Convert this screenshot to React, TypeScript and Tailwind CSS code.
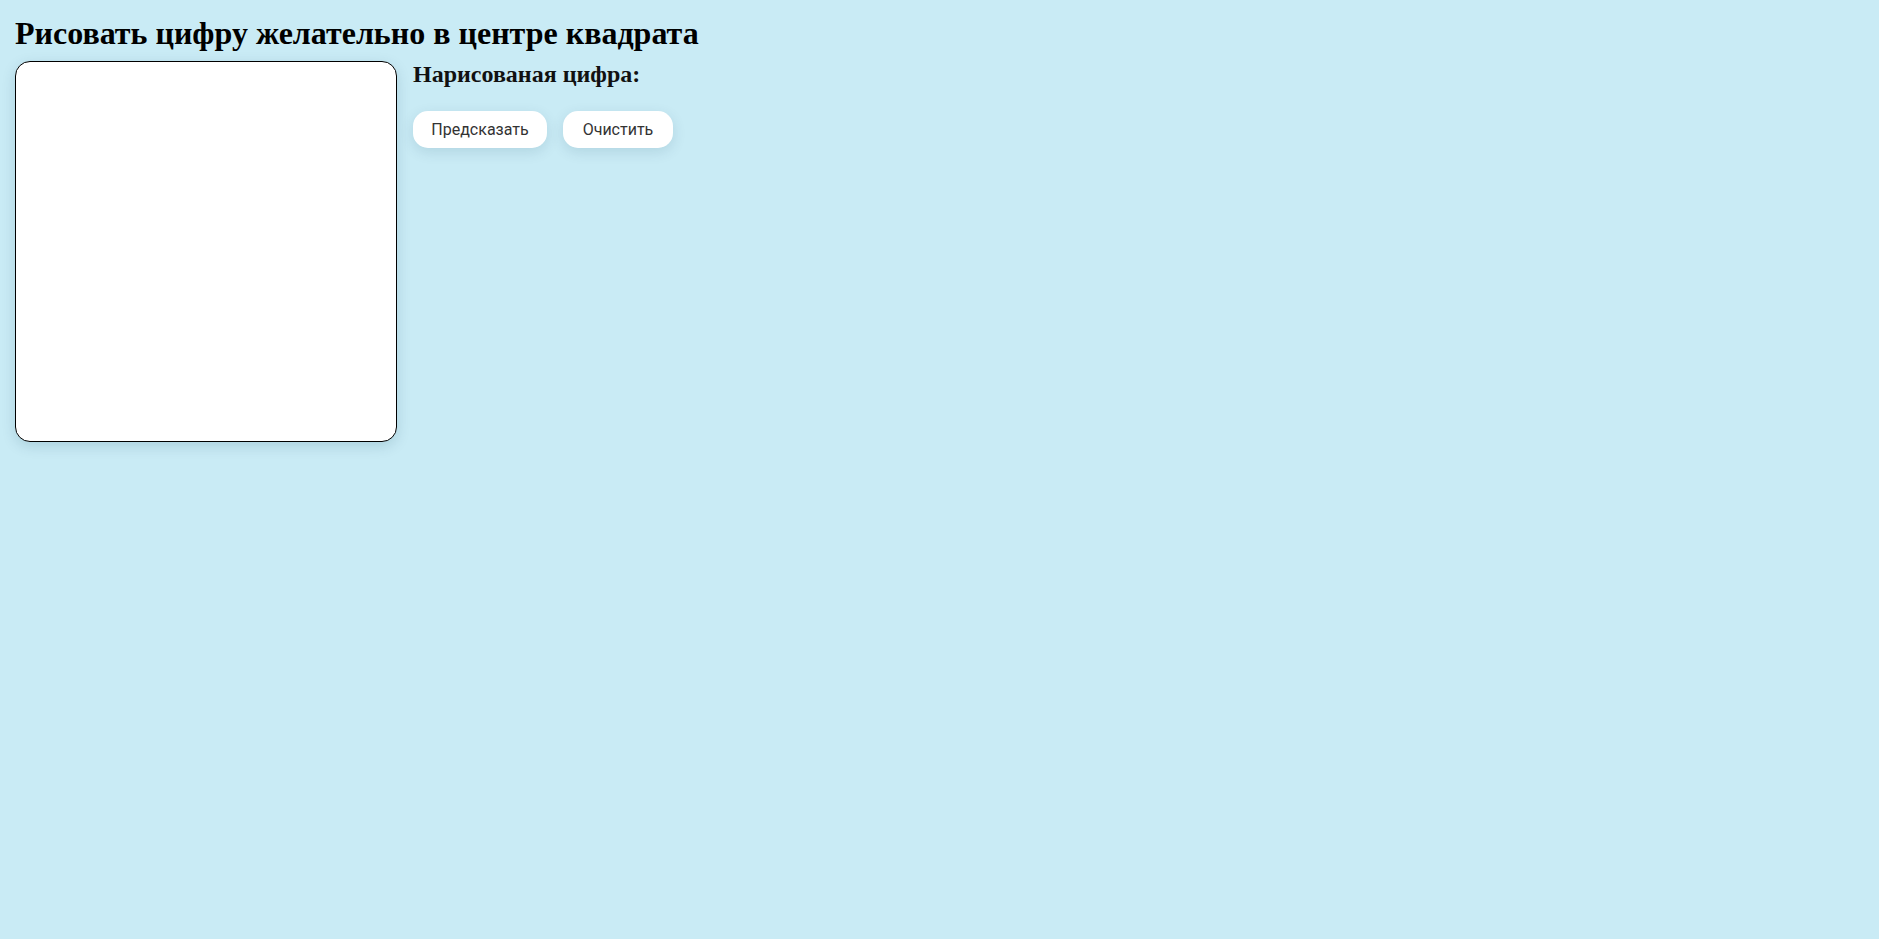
import React from "react";

export default function App() {
  return (
    <div className="min-h-screen w-full bg-[#c9ebf5] px-[15px] pt-[16px]">
      <h1 className="m-0 text-[32px] font-bold leading-[35px] text-black [font-family:'Liberation_Serif','Times_New_Roman',serif]">
        Рисовать цифру желательно в центре квадрата
      </h1>
      <div className="mt-[10px] flex items-start gap-4">
        <div className="h-[381px] w-[382px] shrink-0 rounded-[15px] border border-black bg-white shadow-[0_4px_14px_rgba(0,60,90,0.15)]" />
        <div className="flex flex-col">
          <h2 className="m-0 text-[24px] font-bold leading-[27px] text-[#111] [font-family:'Liberation_Serif','Times_New_Roman',serif]">
            Нарисованая цифра:
          </h2>
          <div className="mt-[23px] flex gap-4">
            <button className="h-[37px] w-[134px] rounded-[15px] bg-white text-[16px] text-[#333] shadow-[0_4px_14px_rgba(0,60,90,0.12)] [font-family:Roboto,'Noto_Sans',sans-serif]">
              Предсказать
            </button>
            <button className="h-[37px] w-[110px] rounded-[15px] bg-white text-[16px] text-[#333] shadow-[0_4px_14px_rgba(0,60,90,0.12)] [font-family:Roboto,'Noto_Sans',sans-serif]">
              Очистить
            </button>
          </div>
        </div>
      </div>
    </div>
  );
}
